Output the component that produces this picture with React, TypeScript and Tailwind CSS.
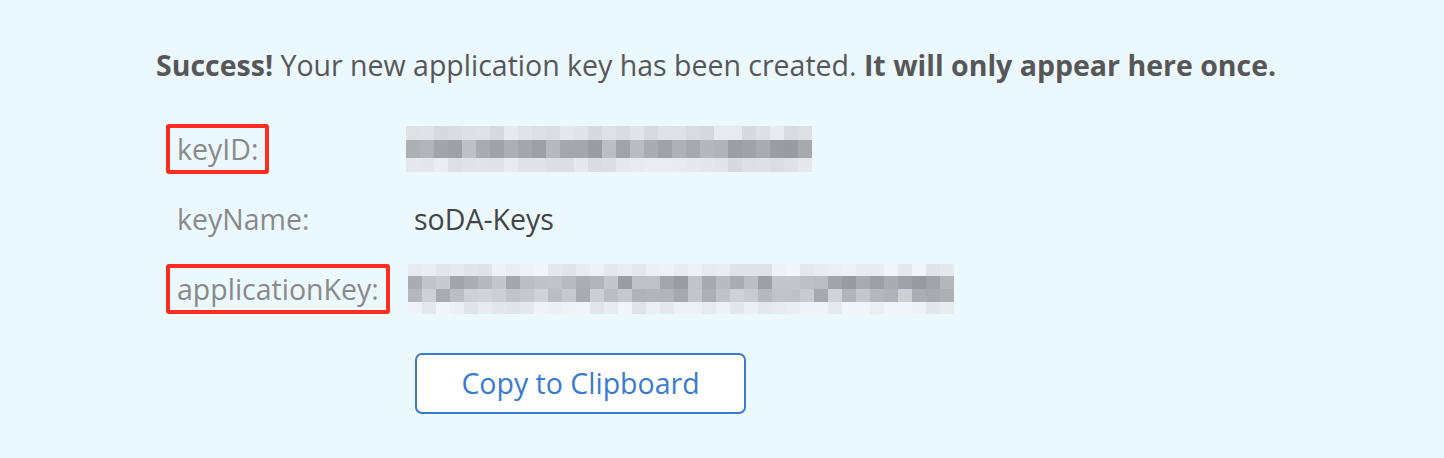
import React from 'react';

// deterministic "pixelated" redaction
const rand = (seed: number) => {
    let s = seed;
    return () => {
        s = (s * 9301 + 49297) % 233280;
        return s / 233280;
    };
};

const PixelBlur: React.FC<{ cols: number; rows: { h: number; min: number; max: number }[]; seed: number; cell: number }> = ({ cols, rows, seed, cell }) => {
    const r = rand(seed);
    return (
        <div className="flex flex-col">
            {rows.map((row, i) => (
                <div key={i} className="flex">
                    {Array.from({ length: cols }).map((_, j) => {
                        const v = Math.round(row.min + (row.max - row.min) * r());
                        const b = Math.min(255, v + 8);
                        return <div key={j} style={{ width: cell, height: row.h, background: `rgb(${v},${v + 4},${b})` }} />;
                    })}
                </div>
            ))}
        </div>
    );
};

const Label: React.FC<{ text: string; boxed?: boolean }> = ({ text, boxed }) => (
    <div className="w-[248px] shrink-0">
        <span className={`inline-block px-[7px] py-[2px] border-4 rounded-[3px] leading-[38px] ${boxed ? 'border-[#ff2d1f]' : 'border-transparent'}`}>
            {text}
        </span>
    </div>
);

export default function App() {
    return (
        <div className="w-[1444px] h-[458px] bg-[#ebf8fe] pl-[156px] pt-[46px] text-[28.5px] text-[#575757]" style={{ fontFamily: '"Open Sans", sans-serif' }}>
            <p className="leading-[38px] whitespace-nowrap">
                <b className="font-bold">Success!</b> Your new application key has been created. <b className="font-bold">It will only appear here once.</b>
            </p>

            <div className="mt-[40px] ml-[10px] flex flex-col text-[#8a8a8a]">
                <div className="flex items-center h-[50px]">
                    <Label text="keyID:" boxed />
                    <div className="-ml-[8px]">
                        <PixelBlur
                            seed={7}
                            cell={14}
                            cols={29}
                            rows={[
                                { h: 14, min: 212, max: 232 },
                                { h: 18, min: 150, max: 190 },
                                { h: 14, min: 214, max: 234 },
                            ]}
                        />
                    </div>
                </div>

                <div className="flex items-center h-[50px] mt-[20px]">
                    <Label text="keyName:" />
                    <span className="text-[#444]">soDA-Keys</span>
                </div>

                <div className="flex items-center h-[50px] mt-[20px]">
                    <Label text="applicationKey:" boxed />
                    <div className="-ml-[6px]">
                        <PixelBlur
                            seed={31}
                            cell={14}
                            cols={39}
                            rows={[
                                { h: 12, min: 222, max: 242 },
                                { h: 13, min: 150, max: 200 },
                                { h: 13, min: 165, max: 210 },
                                { h: 12, min: 224, max: 244 },
                            ]}
                        />
                    </div>
                </div>

                <div className="ml-[249px] mt-[39px]">
                    <button className="w-[331px] h-[61px] bg-white border-2 border-[#3a7bd0] rounded-[7px] text-[#3a7bd0] text-[28.5px]">
                        Copy to Clipboard
                    </button>
                </div>
            </div>
        </div>
    );
}
